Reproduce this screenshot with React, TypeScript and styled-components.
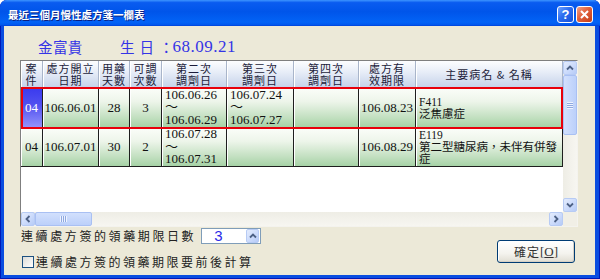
import styled, { createGlobalStyle } from "styled-components"

const GlobalStyle = createGlobalStyle`
  html, body {
    margin: 0;
    padding: 0;
    background: #ffffff;
  }
  * {
    box-sizing: border-box;
  }
  body {
    font-family: "Noto Sans CJK TC", "Liberation Sans", sans-serif;
  }
`

const COLS = "22px 56px 31px 32px 65px 67px 65px 57px 147px"
const CJK = `"Noto Sans CJK TC", "Noto Sans CJK SC", sans-serif`
const NUM = `"Liberation Serif", "Noto Sans CJK TC", serif`

type Align = "center" | "left" | "right"

interface RowData {
  no: string
  start: string
  days: string
  times: string
  second: string
  third: string
  fourth: string
  expire: string
  diagnosis: string
}

const headers = [
  "案\n件",
  "處方開立\n日期",
  "用藥\n天數",
  "可調\n次數",
  "第二次\n調劑日",
  "第三次\n調劑日",
  "第四次\n調劑日",
  "處方有\n效期限",
  "主要病名 & 名稱",
]

const rows: RowData[] = [
  {
    no: "04",
    start: "106.06.01",
    days: "28",
    times: "3",
    second: "106.06.26\n～\n106.06.29",
    third: "106.07.24\n～\n106.07.27",
    fourth: "",
    expire: "106.08.23",
    diagnosis: "F411\n泛焦慮症",
  },
  {
    no: "04",
    start: "106.07.01",
    days: "30",
    times: "2",
    second: "106.07.28\n～\n106.07.31",
    third: "",
    fourth: "",
    expire: "106.08.29",
    diagnosis: "E119\n第二型糖尿病，未伴有併發\n症",
  },
]

const Window = styled.div`
  width: 600px;
  height: 279px;
  display: flex;
  flex-direction: column;
  border-radius: 7px 7px 0 0;
  overflow: hidden;
  background: #0a4de0;
  box-shadow: inset 1px 0 0 #0019b8, inset -1px 0 0 #0019b8, inset 0 -1px 0 #0019b8;
`

const TitleBar = styled.div`
  height: 26px;
  flex: none;
  display: flex;
  align-items: center;
  justify-content: space-between;
  padding: 3px 7px 0 8px;
  background: linear-gradient(
    to bottom,
    #3d95ff 0%,
    #0a5cf0 10%,
    #0055ea 45%,
    #0263f6 85%,
    #0058ee 95%,
    #0040d8 100%
  );
`

const Title = styled.span`
  color: #ffffff;
  font-family: ${CJK};
  font-size: 10.5px;
  font-weight: 700;
  line-height: 14px;
  text-shadow: 1px 1px 0 #0a1e80;
`

const Caption = styled.div`
  display: flex;
  gap: 2px;
`

const CapButton = styled.div<{ $kind: "help" | "close" }>`
  width: 17px;
  height: 17px;
  border: 1px solid #ffffff;
  border-radius: 3px;
  display: flex;
  align-items: center;
  justify-content: center;
  color: #ffffff;
  font-family: "Liberation Sans", sans-serif;
  font-weight: 700;
  font-size: 13px;
  line-height: 1;
  background: ${(p) =>
    p.$kind === "help"
      ? "linear-gradient(135deg, #6da2ff 0%, #2b6cf0 45%, #1550d8 100%)"
      : "linear-gradient(135deg, #f2a087 0%, #e0603a 45%, #c43b16 100%)"};
`

const Content = styled.div`
  flex: 1;
  margin: 0 5px 4px 4px;
  background: #ece9d8;
  padding: 0 17px 0 16px;
  display: flex;
  flex-direction: column;
`

const Patient = styled.div`
  height: 34px;
  display: flex;
  align-items: center;
  padding: 7px 0 0 18px;
  color: #3434e6;
`

const PatientName = styled.span`
  font-family: ${CJK};
  font-size: 14.5px;
  letter-spacing: 0.4px;
  width: 82px;
`

const Birth = styled.span`
  font-family: ${CJK};
  font-size: 14.5px;
  letter-spacing: 5px;
  display: flex;
  align-items: center;
`

const BirthNum = styled.span`
  font-family: ${NUM};
  font-size: 17px;
  letter-spacing: 0.5px;
  margin-left: -6px;
`

const ListFrame = styled.div`
  width: 558px;
  height: 167px;
  display: grid;
  grid-template-columns: 542px 14px;
  grid-template-rows: 151px 14px;
  border: 1px solid;
  border-color: #7f7f7f #f4f3ee #f4f3ee #7f7f7f;
  background: #ffffff;
`

const TableArea = styled.div`
  display: flex;
  flex-direction: column;
  background: #ffffff;
  overflow: hidden;
`

const Row = styled.div<{ $height: number; $selected?: boolean }>`
  position: relative;
  display: grid;
  grid-template-columns: ${COLS};
  height: ${(p) => p.$height}px;
  flex: none;

  &::after {
    content: "";
    display: ${(p) => (p.$selected ? "block" : "none")};
    position: absolute;
    inset: -1px 0 -1px 0;
    border: 2px solid #e8000b;
    pointer-events: none;
    z-index: 1;
  }
`

const HeadCell = styled.div`
  display: flex;
  align-items: center;
  justify-content: center;
  text-align: center;
  border-right: 1px solid #a9b5ca;
  border-bottom: 1px solid #7d8aa3;
  box-shadow: inset 1px 0 0 #ffffff;
  background: linear-gradient(to bottom, #fdfeff 0%, #e6ecf7 45%, #c6d3ea 100%);
  color: #1c1c3a;
  font-family: ${CJK};
  font-size: 11px;
  letter-spacing: 1px;
  line-height: 12px;
  white-space: pre;
`

const Cell = styled.div<{ $align: Align; $current?: boolean }>`
  display: flex;
  align-items: center;
  justify-content: ${(p) =>
    p.$align === "center" ? "center" : p.$align === "right" ? "flex-end" : "flex-start"};
  padding: ${(p) =>
    p.$align === "right" ? "0 2px 0 0" : p.$align === "left" ? "0 0 0 3px" : "0"};
  border-right: 1px solid #1e1e1e;
  border-bottom: 1px solid #1e1e1e;
  box-shadow: inset 1px 0 0 #ffffff;
  background: ${(p) =>
    p.$current
      ? "linear-gradient(to bottom, #3a3aee 0%, #5252f0 45%, #9292fa 100%)"
      : "linear-gradient(to bottom, #fbfdf9 0%, #edf5ea 35%, #c3e0c1 75%, #a6d2a6 100%)"};
  color: ${(p) => (p.$current ? "#ffffff" : "#111111")};
  font-family: ${NUM};
  font-size: 13px;
  line-height: 14px;
  white-space: pre;
`

const Dates = styled.span`
  line-height: 12.5px;
`

const Diagnosis = styled.span`
  font-size: 11.5px;
  line-height: 12px;
`

const VScroll = styled.div`
  display: flex;
  flex-direction: column;
  background: linear-gradient(to right, #eeede5, #f7f6f1);
`

const HScroll = styled.div`
  display: flex;
  background: linear-gradient(to bottom, #eeede5, #f7f6f1);
`

const Corner = styled.div`
  background: #f1efe6;
`

const ArrowButton = styled.div`
  width: 14px;
  height: 14px;
  flex: none;
  display: flex;
  align-items: center;
  justify-content: center;
  border: 1px solid #b7cbf4;
  border-radius: 2px;
  background: linear-gradient(135deg, #e4ecfd 0%, #c9d9fb 60%, #b6cbf7 100%);
`

const Thumb = styled.div<{ $vertical?: boolean; $size: number }>`
  flex: none;
  ${(p) => (p.$vertical ? `height: ${p.$size}px; width: 14px;` : `width: ${p.$size}px; height: 14px;`)}
  display: flex;
  align-items: center;
  justify-content: center;
  border: 1px solid #a9c0f3;
  border-radius: 2px;
  background: ${(p) =>
    p.$vertical
      ? "linear-gradient(to right, #d2e0fd, #bcd0fa)"
      : "linear-gradient(to bottom, #d2e0fd, #bcd0fa)"};
`

const Grip = styled.div<{ $vertical?: boolean }>`
  ${(p) =>
    p.$vertical
      ? `width: 6px; height: 7px;
         background: repeating-linear-gradient(to bottom, #eef3ff 0 1px, #8fa9e0 1px 2px);`
      : `width: 7px; height: 6px;
         background: repeating-linear-gradient(to right, #eef3ff 0 1px, #8fa9e0 1px 2px);`}
`

const Track = styled.div`
  flex: 1;
`

const Footer = styled.div`
  display: flex;
  justify-content: space-between;
  align-items: flex-start;
`

const Options = styled.div`
  display: flex;
  flex-direction: column;
  padding-top: 1px;
`

const LimitRow = styled.div`
  display: flex;
  align-items: center;
  height: 16px;
  margin-left: 1px;
  gap: 5px;
`

const Label = styled.span<{ $spacing: number }>`
  font-family: ${CJK};
  font-size: 12px;
  letter-spacing: ${(p) => p.$spacing}px;
  color: #222222;
  line-height: 14px;
  white-space: nowrap;
`

const SpinBox = styled.div`
  width: 60px;
  height: 16px;
  display: flex;
  align-items: center;
  justify-content: space-between;
  background: #ffffff;
  border: 1px solid #7f9db9;
  padding: 0 1px 0 12px;
`

const SpinValue = styled.span`
  font-family: "Liberation Sans", sans-serif;
  font-size: 15px;
  line-height: 14px;
  color: #2a2ae8;
`

const SpinButton = styled(ArrowButton)`
  width: 13px;
  height: 14px;
`

const CheckRow = styled.label`
  display: flex;
  align-items: center;
  gap: 2px;
  margin: 12px 0 0 2px;
  height: 12px;
`

const CheckBox = styled.span`
  width: 12px;
  height: 12px;
  border: 1px solid #1c5180;
  background: linear-gradient(135deg, #dcdcd7, #ffffff);
`

const OkButton = styled.div`
  width: 78px;
  height: 23px;
  margin: 13px 3px 0 0;
  display: flex;
  align-items: center;
  justify-content: center;
  border: 1px solid #003c74;
  border-radius: 3px;
  background: linear-gradient(to bottom, #ffffff 0%, #f4f3ee 60%, #e0ded3 100%);
  box-shadow: inset -1px -1px 0 #d6d0c5, inset 1px 1px 0 #ffffff;
  font-family: ${CJK};
  font-size: 12px;
  letter-spacing: 1px;
  color: #333333;
`

const Mnemonic = styled.span`
  font-family: "Liberation Serif", serif;
  font-size: 13px;
  letter-spacing: 0;
  u {
    text-decoration-thickness: 1px;
  }
`

const Chevron: React.FC<{ dir: "up" | "down" | "left" | "right" }> = ({ dir }) => {
  const rot = { up: 0, right: 90, down: 180, left: 270 }[dir]
  return (
    <svg width="8" height="8" viewBox="0 0 8 8" style={{ transform: `rotate(${rot}deg)` }}>
      <path d="M1 5.5 L4 2.5 L7 5.5" fill="none" stroke="#4d6185" strokeWidth="1.8" />
    </svg>
  )
}

const App: React.FC = () => {
  return (
    <>
      <GlobalStyle />
      <Window>
        <TitleBar>
          <Title>最近三個月慢性處方箋一欄表</Title>
          <Caption>
            <CapButton $kind="help">?</CapButton>
            <CapButton $kind="close">
              <svg width="9" height="9" viewBox="0 0 9 9">
                <path d="M1 1 L8 8 M8 1 L1 8" stroke="#ffffff" strokeWidth="2" />
              </svg>
            </CapButton>
          </Caption>
        </TitleBar>
        <Content>
          <Patient>
            <PatientName>金富貴</PatientName>
            <Birth>
              生日：<BirthNum>68.09.21</BirthNum>
            </Birth>
          </Patient>

          <ListFrame>
            <TableArea>
              <Row $height={27}>
                {headers.map((h, i) => (
                  <HeadCell key={i}>{h}</HeadCell>
                ))}
              </Row>
              {rows.map((r, i) => (
                <Row key={i} $height={i === 0 ? 40 : 39} $selected={i === 0}>
                  <Cell $align="center" $current={i === 0}>
                    {r.no}
                  </Cell>
                  <Cell $align="center">{r.start}</Cell>
                  <Cell $align="center">{r.days}</Cell>
                  <Cell $align="center">{r.times}</Cell>
                  <Cell $align="left">
                    <Dates>{r.second}</Dates>
                  </Cell>
                  <Cell $align="left">
                    <Dates>{r.third}</Dates>
                  </Cell>
                  <Cell $align="left">
                    <Dates>{r.fourth}</Dates>
                  </Cell>
                  <Cell $align="right">{r.expire}</Cell>
                  <Cell $align="left">
                    <Diagnosis>{r.diagnosis}</Diagnosis>
                  </Cell>
                </Row>
              ))}
            </TableArea>

            <VScroll>
              <ArrowButton>
                <Chevron dir="up" />
              </ArrowButton>
              <Thumb $vertical $size={60}>
                <Grip $vertical />
              </Thumb>
              <Track />
              <ArrowButton>
                <Chevron dir="down" />
              </ArrowButton>
            </VScroll>

            <HScroll>
              <ArrowButton>
                <Chevron dir="left" />
              </ArrowButton>
              <Thumb $size={57}>
                <Grip />
              </Thumb>
              <Track />
              <ArrowButton>
                <Chevron dir="right" />
              </ArrowButton>
            </HScroll>
            <Corner />
          </ListFrame>

          <Footer>
            <Options>
              <LimitRow>
                <Label $spacing={2.6}>連續處方簽的領藥期限日數</Label>
                <SpinBox>
                  <SpinValue>3</SpinValue>
                  <SpinButton>
                    <Chevron dir="up" />
                  </SpinButton>
                </SpinBox>
              </LimitRow>
              <CheckRow>
                <CheckBox />
                <Label $spacing={2.5}>連續處方簽的領藥期限要前後計算</Label>
              </CheckRow>
            </Options>
            <OkButton>
              確定
              <Mnemonic>
                [<u>O</u>]
              </Mnemonic>
            </OkButton>
          </Footer>
        </Content>
      </Window>
    </>
  )
}

export default App
